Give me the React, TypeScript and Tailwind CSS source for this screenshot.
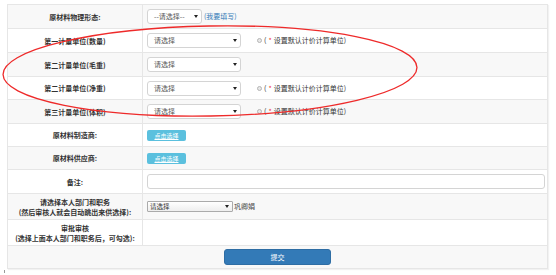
import React from 'react';

const font = { fontFamily: "'Noto Sans CJK SC', 'Noto Sans', sans-serif" };

const Arrow = () => (
  <svg width="4" height="3" viewBox="0 0 4 3" className="shrink-0">
    <path d="M0 0 L4 0 L2 3 Z" fill="#222" />
  </svg>
);

const Select: React.FC<{ text: string; w: string }> = ({ text, w }) => (
  <div
    className={`${w} h-[15px] bg-white border border-[#d4d4d4] rounded-[3px] flex items-center justify-between pl-[6px] pr-[3px] text-[7px] text-[#555]`}
  >
    <span>{text}</span>
    <Arrow />
  </div>
);

const DefaultUnit = () => (
  <div className="flex items-center ml-[16px] text-[7px] text-[#333]">
    <span className="w-[5px] h-[5px] rounded-full border border-[#b5b5b5] bg-[#e8e8e8]" />
    <span className="ml-[2px]">(</span>
    <span className="ml-[2px] text-[#e33]">*</span>
    <span className="ml-[2px]">设置默认计价计算单位)</span>
  </div>
);

const PickButton = () => (
  <div className="w-[39px] h-[11px] bg-[#5bc0de] rounded-[2px] flex items-center justify-center text-[6px] text-white underline">
    点击选择
  </div>
);

const Row: React.FC<{ h: string; gray?: boolean; label: React.ReactNode; children?: React.ReactNode }> = ({
  h,
  gray,
  label,
  children,
}) => (
  <div className={`flex ${h} border-b border-[#e6e6e6] ${gray ? 'bg-[#f8f8f8]' : 'bg-white'}`}>
    <div className="w-[135px] shrink-0 border-r border-[#e6e6e6] flex flex-col items-center justify-center text-[7px] font-bold text-[#333] leading-[10px] text-center">
      {label}
    </div>
    <div className="flex-1 flex items-center pl-[4px]">{children}</div>
  </div>
);

export default function App() {
  return (
    <div className="relative w-[556px] h-[275px] bg-white overflow-hidden" style={font}>
      <div className="pt-[4px] pl-[7px]">
        <div className="w-[541px] border-t border-l border-r border-[#e6e6e6] shadow-[1px_1px_1px_rgba(0,0,0,0.05)]">
          <Row h="h-[24px]" gray label="原材料物理形态:">
            <Select text="--请选择--" w="w-[55px]" />
            <span className="ml-[2px] text-[7px] text-[#337ab7]">(我要填写)</span>
          </Row>
          <Row h="h-[24px]" label="第一计量单位(数量)">
            <Select text="请选择" w="w-[94px]" />
            <DefaultUnit />
          </Row>
          <Row h="h-[24px]" gray label="第二计量单位(毛重)">
            <Select text="请选择" w="w-[94px]" />
          </Row>
          <Row h="h-[23px]" label="第二计量单位(净重)">
            <Select text="请选择" w="w-[94px]" />
            <DefaultUnit />
          </Row>
          <Row h="h-[24px]" gray label="第三计量单位(体积)">
            <Select text="请选择" w="w-[94px]" />
            <DefaultUnit />
          </Row>
          <Row h="h-[23px]" label="原材料制造商:">
            <PickButton />
          </Row>
          <Row h="h-[23px]" gray label="原材料供应商:">
            <PickButton />
          </Row>
          <Row h="h-[24px]" label="备注:">
            <div className="w-[398px] h-[15px] bg-white border border-[#d4d4d4] rounded-[3px]" />
          </Row>
          <Row
            h="h-[26px]"
            gray
            label={
              <>
                <span>请选择本人部门和职务</span>
                <span>(然后审核人就会自动跳出来供选择):</span>
              </>
            }
          >
            <div className="w-[86px] h-[11px] bg-gradient-to-b from-white to-[#eee] border border-[#aaa] rounded-[1px] flex items-center justify-between pl-[2px] pr-[3px] text-[6.5px] text-[#333]">
              <span>请选择</span>
              <Arrow />
            </div>
            <span className="ml-[1px] text-[7px] text-[#444]">巩卿娟</span>
          </Row>
          <Row
            h="h-[26px]"
            label={
              <>
                <span>审批审核</span>
                <span>(选择上面本人部门和职务后，可勾选):</span>
              </>
            }
          />
          <div className="h-[23px] bg-[#f8f8f8] border-b border-[#e6e6e6] flex items-center justify-center">
            <div className="w-[107px] h-[16px] bg-[#337ab7] border border-[#2e6da4] rounded-[3px] flex items-center justify-center text-[7px] text-white">
              提交
            </div>
          </div>
        </div>
      </div>
      <span className="absolute left-[4px] top-[270px] w-[1px] h-[3px] bg-[#999]" />
      <svg className="absolute inset-0 pointer-events-none" width="556" height="275" viewBox="0 0 556 275">
        <ellipse
          cx="210"
          cy="71"
          rx="207"
          ry="45"
          fill="none"
          stroke="#ee2a2a"
          strokeWidth="1.3"
          transform="rotate(-1 210 71)"
        />
      </svg>
    </div>
  );
}
